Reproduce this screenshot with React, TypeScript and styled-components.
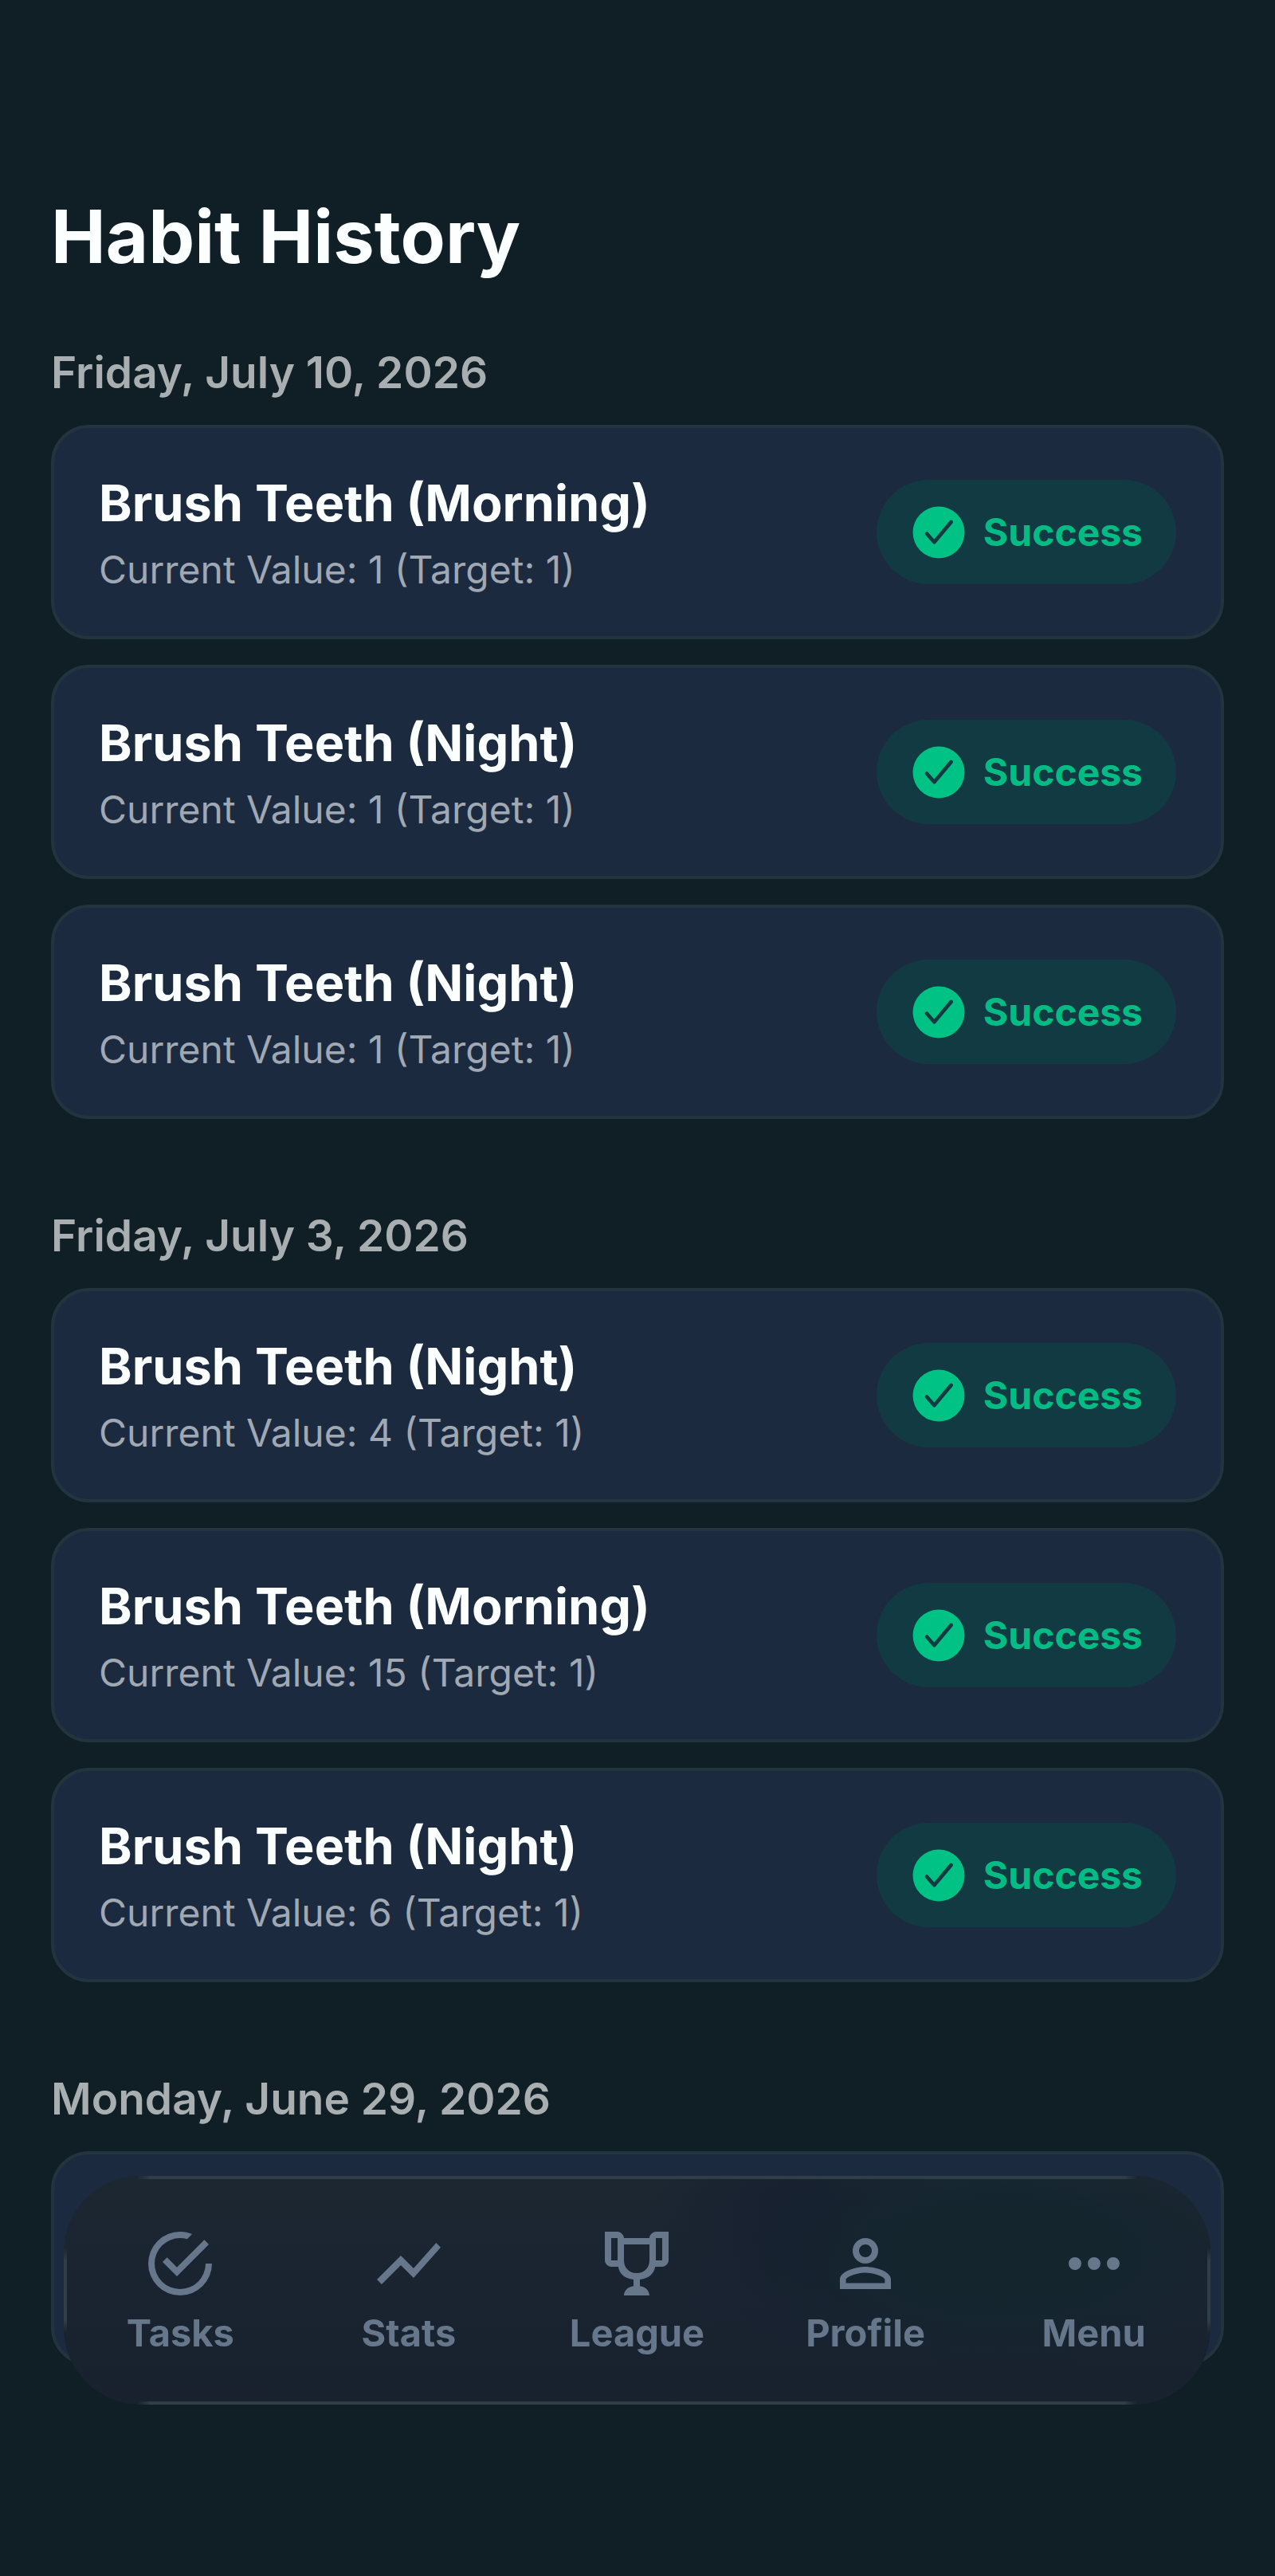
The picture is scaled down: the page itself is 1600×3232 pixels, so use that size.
import React from "react";
import styled, { createGlobalStyle } from "styled-components";

const GlobalStyle = createGlobalStyle`
  *, *::before, *::after { box-sizing: border-box; }
  body {
    margin: 0;
    background: #101f26;
    font-family: Inter, "Liberation Sans", sans-serif;
    -webkit-font-smoothing: antialiased;
  }
  h1, h2, h3, p, ul { margin: 0; padding: 0; }
  ul { list-style: none; }
`;

const Screen = styled.main`
  display: flex;
  flex-direction: column;
  min-height: 100vh;
  padding: 237px 64px 264px;
  background: #101f26;
`;

const PageTitle = styled.h1`
  margin-bottom: 74px;
  font-size: 92px;
  line-height: 120px;
  font-weight: 700;
  color: #fbffff;
`;

const Days = styled.div`
  display: flex;
  flex-direction: column;
  gap: 110px;
`;

const Day = styled.section`
  display: flex;
  flex-direction: column;
  gap: 30px;
`;

const DayTitle = styled.h2`
  font-size: 55px;
  line-height: 72px;
  font-weight: 600;
  color: #a9aeb1;
`;

const CardList = styled.ul`
  display: flex;
  flex-direction: column;
  gap: 32px;
`;

const Card = styled.li`
  display: flex;
  align-items: center;
  justify-content: space-between;
  min-height: 269px;
  padding: 48px 56px;
  border: 4px solid #22343d;
  border-radius: 48px;
  background: #1c2a40;
`;

const CardText = styled.div`
  display: flex;
  flex-direction: column;
  gap: 14px;
`;

const HabitName = styled.h3`
  font-size: 63px;
  line-height: 80px;
  font-weight: 700;
  color: #fbffff;
`;

const HabitValue = styled.p`
  font-size: 48px;
  line-height: 60px;
  font-weight: 400;
  color: #a0a8b3;
`;

const Badge = styled.span`
  display: flex;
  align-items: center;
  gap: 16px;
  height: 131px;
  padding: 0 42px 0 38px;
  border-radius: 66px;
  background: #123a42;
  font-size: 48px;
  line-height: 60px;
  font-weight: 700;
  color: #03bc83;
`;

const BadgeIcon = styled.svg`
  width: 80px;
  height: 80px;
`;

const TabBar = styled.nav`
  position: fixed;
  left: 80px;
  right: 81px;
  bottom: 215px;
  display: flex;
  padding: 62px 3px 58px;
  border-radius: 96px;
  background:
    radial-gradient(ellipse 340px 150px at 82% 34%, #14252e 40%, rgba(20, 37, 46, 0) 100%),
    radial-gradient(ellipse 180px 190px at 64% 20%, #182130 20%, rgba(24, 33, 48, 0) 100%),
    linear-gradient(180deg, #1c2731 0%, #1a2431 50%, #18212d 100%);

  &::before,
  &::after {
    content: "";
    position: absolute;
    pointer-events: none;
    border: 0 solid #303e4a;
  }
  &::before {
    inset: 0 92px;
    border-width: 4px 0;
    mask-image: linear-gradient(90deg, transparent, #000 16px, #000 calc(100% - 16px), transparent);
  }
  &::after {
    inset: 90px 0;
    border-width: 0 4px;
    mask-image: linear-gradient(180deg, transparent, #000 16px, #000 calc(100% - 16px), transparent);
  }
`;

const Tab = styled.a`
  display: flex;
  flex: 1;
  flex-direction: column;
  align-items: center;
  gap: 7px;
  font-size: 47px;
  line-height: 64px;
  font-weight: 700;
  color: #66768b;
  text-decoration: none;
`;

const TabIcon = styled.svg`
  width: 96px;
  height: 96px;
  fill: currentColor;
`;

type Entry = { name: string; value: number; target: number };

const days: { date: string; entries: Entry[] }[] = [
  {
    date: "Friday, July 10, 2026",
    entries: [
      { name: "Brush Teeth (Morning)", value: 1, target: 1 },
      { name: "Brush Teeth (Night)", value: 1, target: 1 },
      { name: "Brush Teeth (Night)", value: 1, target: 1 },
    ],
  },
  {
    date: "Friday, July 3, 2026",
    entries: [
      { name: "Brush Teeth (Night)", value: 4, target: 1 },
      { name: "Brush Teeth (Morning)", value: 15, target: 1 },
      { name: "Brush Teeth (Night)", value: 6, target: 1 },
    ],
  },
];

const tabs = [
  {
    label: "Tasks",
    path: "M20,12A8,8 0 0,1 12,20A8,8 0 0,1 4,12A8,8 0 0,1 12,4C12.76,4 13.5,4.11 14.2,4.31L15.77,2.74C14.61,2.26 13.34,2 12,2A10,10 0 0,0 2,12A10,10 0 0,0 12,22A10,10 0 0,0 22,12M7.91,10.08L6.5,11.5L11,16L21,6L19.59,4.58L11,13.17L7.91,10.08Z",
  },
  {
    label: "Stats",
    path: "M3.5,18.5L9.5,12.5L13.5,16.5L22,6.92L20.59,5.5L13.5,13.5L9.5,9.5L2,17L3.5,18.5Z",
  },
  {
    label: "League",
    path: "M18 2C17.1 2 16 3 16 4H8C8 3 6.9 2 6 2H2V11C2 12 3 13 4 13H6.2C6.6 15 7.9 16.7 11 17V19.08C8 19.54 8 22 8 22H16C16 22 16 19.54 13 19.08V17C16.1 16.7 17.4 15 17.8 13H20C21 13 22 12 22 11V2H18M6 11H4V4H6V11M20 11H18V4H20V11M16 11C16 13.2 14.5 15 12 15C9.5 15 8 13.2 8 11V6H16V11Z",
  },
  {
    label: "Profile",
    path: "M12,4A4,4 0 0,1 16,8A4,4 0 0,1 12,12A4,4 0 0,1 8,8A4,4 0 0,1 12,4M12,6A2,2 0 0,0 10,8A2,2 0 0,0 12,10A2,2 0 0,0 14,8A2,2 0 0,0 12,6M12,13C14.67,13 20,14.33 20,17V20H4V17C4,14.33 9.33,13 12,13M12,14.9C9.03,14.9 5.9,16.36 5.9,17V18.1H18.1V17C18.1,16.36 14.97,14.9 12,14.9Z",
  },
  {
    label: "Menu",
    path: "M16,12A2,2 0 0,1 18,10A2,2 0 0,1 20,12A2,2 0 0,1 18,14A2,2 0 0,1 16,12M10,12A2,2 0 0,1 12,10A2,2 0 0,1 14,12A2,2 0 0,1 12,14A2,2 0 0,1 10,12M4,12A2,2 0 0,1 6,10A2,2 0 0,1 8,12A2,2 0 0,1 6,14A2,2 0 0,1 4,12Z",
  },
];

function SuccessBadge() {
  return (
    <Badge>
      <BadgeIcon viewBox="0 0 512 512" aria-hidden="true">
        <circle cx="256" cy="256" r="208" fill="#00c285" />
        <path
          d="M160 266L220 334L356 172"
          fill="none"
          stroke="#123a42"
          strokeWidth="30"
          strokeLinecap="round"
          strokeLinejoin="round"
        />
      </BadgeIcon>
      Success
    </Badge>
  );
}

function HabitCard({ name, value, target }: Entry) {
  return (
    <Card>
      <CardText>
        <HabitName>{name}</HabitName>
        <HabitValue>{`Current Value: ${value} (Target: ${target})`}</HabitValue>
      </CardText>
      <SuccessBadge />
    </Card>
  );
}

export default function App() {
  return (
    <>
      <GlobalStyle />
      <Screen>
        <PageTitle>Habit History</PageTitle>
        <Days>
          {days.map((day) => (
            <Day key={day.date}>
              <DayTitle>{day.date}</DayTitle>
              <CardList>
                {day.entries.map((entry, i) => (
                  <HabitCard key={i} {...entry} />
                ))}
              </CardList>
            </Day>
          ))}
          <Day>
            <DayTitle>Monday, June 29, 2026</DayTitle>
            <CardList>
              <Card />
            </CardList>
          </Day>
        </Days>
      </Screen>
      <TabBar>
        {tabs.map((tab) => (
          <Tab key={tab.label} href="#">
            <TabIcon viewBox="0 0 24 24" aria-hidden="true">
              <path d={tab.path} />
            </TabIcon>
            {tab.label}
          </Tab>
        ))}
      </TabBar>
    </>
  );
}
